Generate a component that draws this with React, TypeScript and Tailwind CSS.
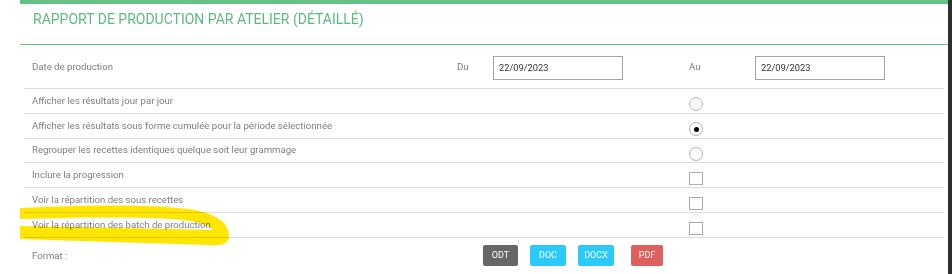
import React from "react";

type Row = { label: string; kind: "radio" | "check"; checked?: boolean };

const rows: Row[] = [
  { label: "Afficher les résultats jour par jour", kind: "radio" },
  { label: "Afficher les résultats sous forme cumulée pour la période sélectionnée", kind: "radio", checked: true },
  { label: "Regrouper les recettes identiques quelque soit leur grammage", kind: "radio" },
  { label: "Inclure la progression", kind: "check" },
  { label: "Voir la répartition des sous recettes", kind: "check" },
  { label: "Voir la répartition des batch de production", kind: "check" },
];

const DateBox = ({ value }: { value: string }) => (
  <div className="flex h-[24px] w-[130px] items-center border border-[#a3a3a3] pl-[5px] text-[9.3px] text-[#333]">
    {value}
  </div>
);

const Control = ({ row }: { row: Row }) =>
  row.kind === "radio" ? (
    <span className="mt-[7px] flex h-[14px] w-[14px] items-center justify-center rounded-full border border-[#b0b0b0]">
      {row.checked && <span className="h-[5px] w-[5px] rounded-full bg-black" />}
    </span>
  ) : (
    <span className="mt-[7px] h-[13px] w-[14px] border border-[#acacac]" />
  );

const App = (): JSX.Element => {
  return (
    <div className="relative flex h-[274px] w-[952px] overflow-hidden bg-white font-['Roboto','Liberation_Sans',sans-serif]">
      <div className="w-5 shrink-0" />
      <div className="flex w-[928px] flex-col border-t-4 border-[#66c185]">
        <div className="h-[41px] border-b border-[#66c185] pl-[13px] pt-[7px]">
          <h1 className="text-[14px] leading-[16px] text-[#5dba7c]">RAPPORT DE PRODUCTION PAR ATELIER (DÉTAILLÉ)</h1>
        </div>
        <div className="flex flex-col px-1 text-[9.6px] text-[#7e7e7e]">
          <div className="flex h-[44px] items-center border-b border-[#dcdcdc] pt-[2px]">
            <span className="w-[433px] pl-2">Date de production</span>
            <span className="w-[36px]">Du</span>
            <DateBox value="22/09/2023" />
            <span className="w-[66px]" />
            <span className="w-[66px]">Au</span>
            <DateBox value="22/09/2023" />
          </div>
          {rows.map((row, i) => (
            <div key={i} className="flex h-[24.8px] items-center border-b border-[#dcdcdc]">
              <span className="w-[665px] pl-2">{row.label}</span>
              <Control row={row} />
            </div>
          ))}
          <div className="flex h-[36px] items-center">
            <span className="w-[459px] pl-2">Format :</span>
            <button className="h-[21px] w-[35px] rounded-[2px] bg-[#666666] text-[9px] text-white">ODT</button>
            <button className="ml-[12px] h-[21px] w-[36px] rounded-[2px] bg-[#2acbfa] text-[9px] text-white">DOC</button>
            <button className="ml-[12px] h-[21px] w-[36px] rounded-[2px] bg-[#2acbfa] text-[9px] text-white">DOCX</button>
            <button className="ml-[17px] h-[21px] w-[32px] rounded-[2px] bg-[#df5e5e] text-[9px] text-white">PDF</button>
          </div>
        </div>
      </div>
      <div className="w-1 shrink-0 bg-[#2f2f2f]" />
      {/* marker scribble from the screenshot annotation */}
      <svg
        className="pointer-events-none absolute left-0 top-0 mix-blend-multiply"
        width="952"
        height="274"
        viewBox="0 0 952 274"
      >
        <path
          fill="#ffe600"
          d="M 20 208 C 80 205, 150 204, 188 209 C 218 213, 229 224, 229 236 C 229 244, 222 246, 208 245 C 150 243, 80 241, 20 239 L 20 226 C 80 227, 160 229, 213 230 C 208 223, 190 219, 150 218 C 100 217, 60 218, 20 219 Z"
        />
      </svg>
    </div>
  );
};

export default App;
